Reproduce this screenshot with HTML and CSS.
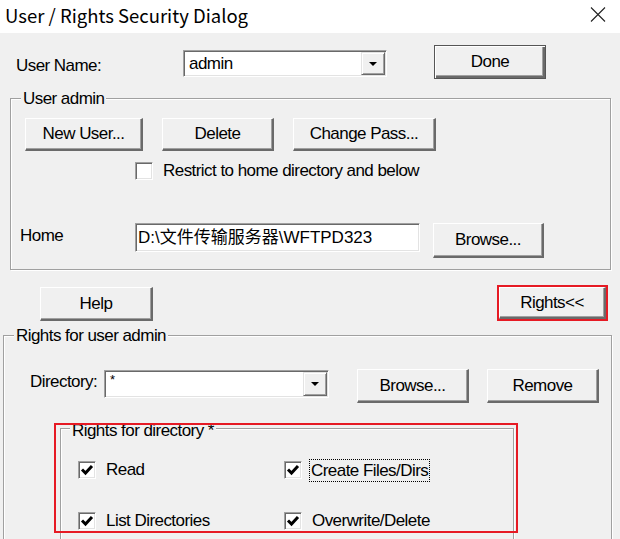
FILE: index.html
```html
<!DOCTYPE html>
<html lang="zh-CN">
<head>
  <meta charset="UTF-8">
  <title>User / Rights Security Dialog</title>
  <link rel="stylesheet" href="styles.css">
</head>
<body>

<!-- Заголовок окна -->
<div class="titlebar">
  <span class="title">User / Rights Security Dialog</span>
  <svg class="close" width="16" height="15" viewBox="0 0 16 15">
    <path d="M1 0.5L15 14.5M15 0.5L1 14.5" stroke="#222" stroke-width="1.1" fill="none"/>
  </svg>
</div>

<div class="row-user">
  <label class="lbl-user">User Name:</label>
  <div class="combo sunken combo-user">
    <span class="combo-text">admin</span>
    <span class="combo-btn"><i class="arrow"></i></span>
  </div>
  <button class="btn btn-default btn-done">Done</button>
</div>

<!-- Группа: управление пользователем -->
<fieldset class="group group-admin">
  <legend>User admin</legend>
  <div class="row-buttons">
    <button class="btn btn-new">New User...</button>
    <button class="btn btn-delete">Delete</button>
    <button class="btn btn-pass">Change Pass...</button>
  </div>
  <div class="row-restrict">
    <span class="check sunken"></span>
    <span>Restrict to home directory and below</span>
  </div>
  <div class="row-home">
    <label class="lbl-home">Home</label>
    <div class="edit sunken edit-home">D:\文件传输服务器\WFTPD323</div>
    <button class="btn btn-browse-home">Browse...</button>
  </div>
</fieldset>

<div class="row-help">
  <button class="btn btn-help">Help</button>
  <button class="btn btn-rights">Rights&lt;&lt;</button>
</div>

<!-- Группа: права пользователя -->
<fieldset class="group group-rights">
  <legend>Rights for user admin</legend>
  <div class="row-dir">
    <label class="lbl-dir">Directory:</label>
    <div class="combo sunken combo-dir">
      <span class="combo-text star">*</span>
      <span class="combo-btn"><i class="arrow"></i></span>
    </div>
    <button class="btn btn-browse-dir">Browse...</button>
    <button class="btn btn-remove">Remove</button>
  </div>

  <fieldset class="group group-dir">
    <legend>Rights for directory *</legend>
    <div class="checks">
      <div class="check-item">
        <span class="check sunken"><svg viewBox="0 0 16 16"><path d="M3 7.5L6.5 11L13 4"/></svg></span>
        <span>Read</span>
      </div>
      <div class="check-item">
        <span class="check sunken"><svg viewBox="0 0 16 16"><path d="M3 7.5L6.5 11L13 4"/></svg></span>
        <span class="focus">Create Files/Dirs</span>
      </div>
      <div class="check-item">
        <span class="check sunken"><svg viewBox="0 0 16 16"><path d="M3 7.5L6.5 11L13 4"/></svg></span>
        <span>List Directories</span>
      </div>
      <div class="check-item">
        <span class="check sunken"><svg viewBox="0 0 16 16"><path d="M3 7.5L6.5 11L13 4"/></svg></span>
        <span>Overwrite/Delete</span>
      </div>
    </div>
  </fieldset>
</fieldset>

<!-- Красная рамка-пометка поверх группы -->
<div class="mark mark-dir"></div>

</body>
</html>
```

FILE: styles.css
```css
* {
  box-sizing: border-box;
}

body {
  margin: 0;
  height: 539px;
  overflow: hidden;
  position: relative;
  background: #f0f0f0;
  color: #000;
  font-family: "Liberation Sans", Arial, "Noto Sans CJK SC", sans-serif;
  font-size: 17px;
  letter-spacing: -0.55px;
  line-height: 20px;
}

/* заголовок */
.titlebar {
  height: 33px;
  background: #fff;
  display: flex;
  align-items: center;
  justify-content: space-between;
  padding: 0 14px 0 5px;
}

.title {
  font-family: "Noto Sans CJK SC", "Noto Sans", sans-serif;
  font-size: 18.5px;
  letter-spacing: 0;
  margin-bottom: 3px;
}

.close {
  margin-bottom: 4px;
}

/* объёмные элементы */
.btn {
  font: inherit;
  letter-spacing: inherit;
  color: #000;
  padding: 0;
  background: #f0f0f0;
  border-style: solid;
  border-width: 1px 2px 2px 1px;
  border-color: #fff #6a6a6a #6a6a6a #fff;
  box-shadow: inset -1px -1px 0 #a0a0a0;
}

.btn-default {
  border: 1px solid #555;
  box-shadow: inset 1px 1px 0 #fff, inset -2px -2px 0 #6a6a6a, inset -3px -3px 0 #a0a0a0;
}

.sunken {
  background: #fff;
  border: 1px solid;
  border-color: #a0a0a0 #fff #fff #a0a0a0;
  box-shadow: inset 1px 1px 0 #696969, inset -1px -1px 0 #e3e3e3;
}

.combo {
  display: flex;
}

.combo-text {
  flex: 1;
  padding-left: 5px;
  align-self: center;
}

.star {
  align-self: flex-start;
  font-size: 13px;
  line-height: 14px;
  margin-top: 2px;
}

.combo-btn {
  width: 24px;
  margin: 1px 1px 1px 0;
  display: flex;
  align-items: center;
  justify-content: center;
  background: #f0f0f0;
  border: 1px solid;
  border-color: #e3e3e3 #696969 #696969 #e3e3e3;
  box-shadow: inset 1px 1px 0 #fff, inset -1px -1px 0 #a0a0a0;
}

.arrow {
  width: 0;
  height: 0;
  border-top: 4px solid #000;
  border-left: 4px solid transparent;
  border-right: 4px solid transparent;
}

.check {
  width: 18px;
  height: 18px;
  flex: none;
  display: flex;
  align-items: center;
  justify-content: center;
}

.check svg {
  width: 16px;
  height: 16px;
}

.check path {
  fill: none;
  stroke: #000;
  stroke-width: 3;
}

/* группы */
.group {
  margin: 0;
  padding: 0;
  min-width: 0;
  border: 1px solid #a0a0a0;
  box-shadow: inset 1px 1px 0 #fff, 1px 1px 0 #fff;
}

.group legend {
  margin-left: 10px;
  padding: 2px 2px 0;
  line-height: 20px;
  background: #f0f0f0;
}

/* строка пользователя */
.row-user {
  display: flex;
  align-items: flex-start;
  height: 34px;
  margin-top: 12px;
}

.lbl-user {
  margin: 11px 0 0 16px;
  width: 167px;
}

.combo-user {
  margin-top: 5px;
  width: 204px;
  height: 27px;
}

.btn-done {
  margin-left: 47px;
  width: 112px;
  height: 34px;
}

.group-admin {
  margin: 8px 0 0 10px;
  width: 601px;
  padding: 9px 0 11px;
}

.row-buttons {
  display: flex;
  margin-left: 14px;
  gap: 19px;
}

.row-buttons .btn {
  height: 33px;
}

.btn-new {
  width: 118px;
}

.btn-delete {
  width: 112px;
}

.btn-pass {
  width: 143px;
}

.row-restrict {
  display: flex;
  align-items: center;
  gap: 10px;
  height: 18px;
  line-height: 18px;
  margin: 11px 0 0 124px;
}

.row-home {
  display: flex;
  align-items: flex-start;
  margin-top: 43px;
}

.lbl-home {
  margin: 3px 0 0 9px;
  width: 115px;
}

.edit-home {
  width: 285px;
  height: 29px;
  padding-left: 2px;
  line-height: 27px;
  letter-spacing: 0;
}

.btn-browse-home {
  margin-left: 13px;
  width: 111px;
  height: 35px;
}

/* Help / Rights */
.row-help {
  display: flex;
  align-items: flex-start;
  height: 36px;
  margin-top: 15px;
}

.btn-help {
  margin: 2px 0 0 40px;
  width: 113px;
  height: 34px;
}

.btn-rights {
  margin: 2px 14px 0 auto;
  width: 107px;
  height: 32px;
  outline: 2px solid #e61a24;
}

.group-rights {
  margin: 3px 0 0 3px;
  width: 609px;
  padding-top: 23px;
}

.row-dir {
  display: flex;
  align-items: flex-start;
}

.lbl-dir {
  margin: 3px 0 0 26px;
  width: 74px;
}

.combo-dir {
  margin-top: 1px;
  width: 225px;
  height: 28px;
}

.btn-browse-dir {
  margin-left: 28px;
  width: 112px;
  height: 34px;
}

.btn-remove {
  margin-left: 18px;
  width: 112px;
  height: 34px;
}

.group-dir {
  margin: 12px 0 0 56px;
  width: 454px;
  padding: 17px 0 40px;
}

.group-dir legend {
  margin-left: 9px;
  padding-top: 6px;
}

.checks {
  display: grid;
  grid-template-columns: 206px auto;
  row-gap: 27px;
  margin-left: 17px;
}

.check-item {
  display: flex;
  align-items: center;
  gap: 10px;
  height: 24px;
}

.focus {
  margin-left: -3px;
  padding: 0 1px;
  border: 1px dotted #000;
  line-height: 21px;
}

/* пометка */
.mark {
  position: absolute;
  border: 2px solid #e61a24;
  pointer-events: none;
}

.mark-dir {
  left: 54px;
  top: 423px;
  width: 464px;
  height: 110px;
}
```
